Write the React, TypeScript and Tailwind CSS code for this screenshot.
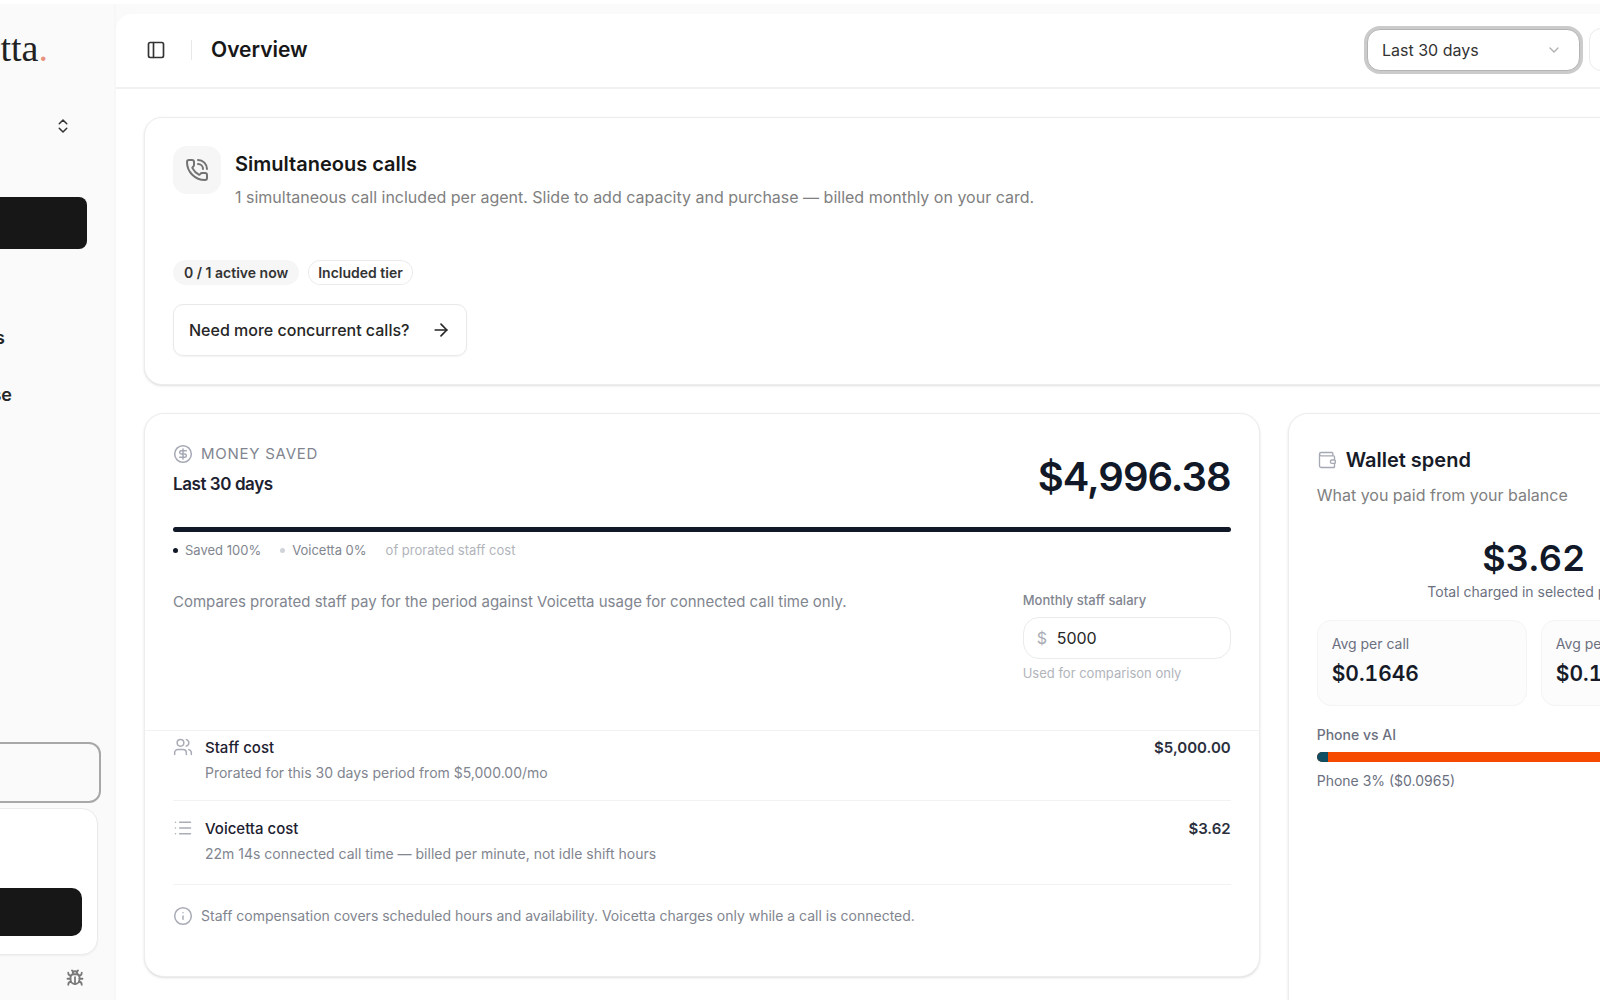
import {
  ArrowRight,
  Bug,
  ChevronDown,
  ChevronsUpDown,
  CircleDollarSign,
  Info,
  List,
  PanelLeft,
  PhoneCall,
  Users,
  Wallet,
} from 'lucide-react';
import { useState } from 'react';
import type { LucideIcon } from 'lucide-react';

const costRows: { icon: LucideIcon; title: string; detail: string; amount: string }[] = [
  {
    icon: Users,
    title: 'Staff cost',
    detail: 'Prorated for this 30 days period from $5,000.00/mo',
    amount: '$5,000.00',
  },
  {
    icon: List,
    title: 'Voicetta cost',
    detail: '22m 14s connected call time — billed per minute, not idle shift hours',
    amount: '$3.62',
  },
];

const averages = [
  { label: 'Avg per call', value: '$0.1646' },
  { label: 'Avg per minute', value: '$0.1628' },
];

function Sidebar() {
  return (
    <aside className="flex w-[116px] shrink-0 justify-end overflow-hidden">
      <div className="flex w-[272px] shrink-0 flex-col border-r-2 border-[#f7f7f7]">
        <div className="mt-3 flex h-16 items-center justify-end pr-[66px] font-['Liberation_Serif',serif] text-[38px] text-[#222222]">
          Voicetta<span className="text-[#e8917c]">.</span>
        </div>
        <button type="button" aria-label="Switch workspace" className="mt-[18px] flex h-14 items-center justify-end pr-[42px]">
          <ChevronsUpDown className="size-[18px] text-[#333333]" />
        </button>
        <nav className="mt-[43px] flex flex-col">
          <a href="#overview" aria-label="Overview" className="mr-[27px] h-[52px] rounded-lg bg-[#171717]" />
          <a
            href="#numbers"
            className="mt-[60px] flex h-[57px] items-center justify-end pr-[109px] text-[18px] font-semibold text-[#262626]"
          >
            Phone numbers
          </a>
          <a
            href="#knowledge"
            className="flex h-[57px] items-center justify-end pr-[102px] text-[18px] font-semibold text-[#262626]"
          >
            Knowledge base
          </a>
        </nav>
        <div className="mt-auto flex flex-col">
          <button
            type="button"
            aria-label="Account"
            className="mr-[13px] h-[61px] rounded-xl border-2 border-[#a8a8a8] bg-[#fafafa]"
          />
          <div className="mt-[5px] mr-4 h-[147px] rounded-2xl border border-[#ebebeb] bg-white px-[15px] pt-[79px] shadow-xs">
            <button type="button" aria-label="Add credit" className="block h-[48px] w-full rounded-[10px] bg-[#171717]" />
          </div>
          <button type="button" aria-label="Report a bug" className="flex h-[45px] items-center justify-end pr-[30px]">
            <Bug className="size-[18px] text-[#7a7a7a]" strokeWidth={2.4} />
          </button>
        </div>
      </div>
    </aside>
  );
}

function Header() {
  const [range, setRange] = useState('30');

  return (
    <header className="flex h-[75px] items-center border-b-2 border-[#f1f1f1] pb-[2px] pl-[30px]">
      <button type="button" aria-label="Toggle sidebar">
        <PanelLeft className="size-5 text-[#333333]" />
      </button>
      <div className="ml-[25px] h-5 w-px bg-[#e8e8e8]" />
      <h1 className="ml-[19px] text-[21px] font-semibold text-[#171717]">Overview</h1>
      <div className="relative ml-auto">
        <select
          aria-label="Date range"
          value={range}
          onChange={(event) => setRange(event.target.value)}
          className="h-[42px] w-[213px] appearance-none rounded-[13px] border border-[#b4b4b4] bg-white pl-[14px] text-[16px] text-[#333333] ring-3 ring-[#cbcbcb] outline-none"
        >
          <option value="7">Last 7 days</option>
          <option value="30">Last 30 days</option>
          <option value="90">Last 90 days</option>
        </select>
        <ChevronDown className="pointer-events-none absolute top-[13px] right-[18px] size-4 text-[#b0b0b0]" />
      </div>
      <button
        type="button"
        aria-label="Refresh"
        className="ml-[9px] h-[43px] w-[219px] shrink-0 rounded-xl border border-[#ebebeb] bg-white"
      />
    </header>
  );
}

function SimultaneousCalls() {
  return (
    <section className="rounded-[18px] border border-[#ededed] bg-white p-7 shadow-sm">
      <div className="flex gap-[14px]">
        <div className="flex size-12 items-center justify-center rounded-[14px] bg-[#f6f6f6]">
          <PhoneCall className="size-6 text-[#737373]" />
        </div>
        <div>
          <h2 className="mt-[2px] text-[20px] leading-8 font-semibold text-[#171717]">Simultaneous calls</h2>
          <p className="mt-[5px] text-[16px] leading-6 text-[#808080]">
            1 simultaneous call included per agent. Slide to add capacity and purchase — billed monthly on your card.
          </p>
        </div>
      </div>
      <div className="mt-[51px] flex gap-[9px] text-[14px] leading-[25px] font-semibold text-[#333333]">
        <span className="rounded-full bg-[#f6f6f6] px-[11px]">0 / 1 active now</span>
        <span className="rounded-full bg-white px-[10px] ring-1 ring-[#ebebeb] ring-inset">Included tier</span>
      </div>
      <button
        type="button"
        className="mt-[19px] flex h-[52px] items-center gap-[22px] rounded-[10px] border border-[#e9e9e9] px-[15px] text-[16px] font-medium text-[#262626] shadow-xs"
      >
        Need more concurrent calls?
        <ArrowRight className="size-5" />
      </button>
    </section>
  );
}

function MoneySaved() {
  const [salary, setSalary] = useState('5000');

  return (
    <section className="self-start rounded-[20px] border border-[#ededed] bg-white pb-12 text-[#81858f] shadow-sm">
      <div className="px-7">
        <div className="flex items-start justify-between pt-[26px]">
          <div>
            <p className="flex items-center gap-2 text-[15px] leading-7 tracking-wider uppercase">
              <CircleDollarSign className="size-5 text-[#a5a9b4]" strokeWidth={1.8} />
              Money saved
            </p>
            <h2 className="text-[17px] leading-8 font-semibold tracking-tight text-[#1d2130]">Last 30 days</h2>
          </div>
          <p className="mt-[13px] text-[40px] leading-[48px] font-semibold tracking-tight text-[#111827]">$4,996.38</p>
        </div>
        <div className="mt-[26px] h-[5px] rounded-full bg-[#111827]" />
        <div className="mt-2 flex items-center text-[13px] leading-5">
          <span className="mr-[7px] size-[5px] rounded-full bg-[#111827]" />
          Saved 100%
          <span className="mr-[7px] ml-[19px] size-[5px] rounded-full bg-[#d0d3d9]" />
          Voicetta 0%
          <span className="ml-[19px] text-[#b1b4bb]">of prorated staff cost</span>
        </div>
        <div className="mt-[30px] flex justify-between gap-8">
          <p className="text-[15px] leading-6">
            Compares prorated staff pay for the period against Voicetta usage for connected call time only.
          </p>
          <div className="w-[208px] shrink-0">
            <label htmlFor="salary" className="block text-[13px] leading-5 font-medium">
              Monthly staff salary
            </label>
            <div className="relative mt-[7px] text-[16px]">
              <span className="absolute top-2 left-[14px] leading-[26px] text-[#a9acb4]">$</span>
              <input
                id="salary"
                inputMode="numeric"
                value={salary}
                onChange={(event) => setSalary(event.target.value)}
                className="h-[42px] w-full rounded-2xl border border-[#e9ebed] bg-white pl-[33px] text-[#262626] outline-none"
              />
            </div>
            <p className="mt-1 text-[13px] leading-5 text-[#b1b4bb]">Used for comparison only</p>
          </div>
        </div>
      </div>

      <ul className="mt-[47px] border-t border-[#f1f2f3] px-7">
        {costRows.map(({ icon: Icon, title, detail, amount }) => (
          <li key={title} className="flex items-start border-b border-[#f1f2f3] pt-1 first:h-[70px] last:h-[84px] last:pt-[15px]">
            <Icon className="mt-[2px] size-5 text-[#a9acb6]" strokeWidth={1.8} />
            <div className="ml-3">
              <h3 className="text-[15px] leading-[25px] font-medium text-[#1d2130]">{title}</h3>
              <p className="text-[14px] leading-[25px]">{detail}</p>
            </div>
            <p className="ml-auto text-[15px] leading-[25px] font-semibold text-[#2b2f3d]">{amount}</p>
          </li>
        ))}
      </ul>
      <p className="mt-[19px] flex items-center gap-2 px-7 text-[14px] leading-6">
        <Info className="size-5 text-[#a9acb6]" strokeWidth={1.8} />
        Staff compensation covers scheduled hours and availability. Voicetta charges only while a call is connected.
      </p>
    </section>
  );
}

function WalletSpend() {
  return (
    <section className="h-[640px] rounded-[20px] border border-[#ededed] bg-white px-7 pt-[30px] text-[#6b7080] shadow-sm">
      <div className="flex items-center gap-[9px]">
        <Wallet className="size-5 text-[#a5a9b4]" strokeWidth={1.6} />
        <h2 className="text-[20px] leading-8 font-semibold text-[#171b28]">Wallet spend</h2>
      </div>
      <p className="mt-[7px] text-[16px] leading-6 text-[#808080]">What you paid from your balance</p>
      <div className="mt-[27px] text-center">
        <p className="text-[36px] leading-[48px] font-semibold text-[#111827] tabular-nums">$3.62</p>
        <p className="text-[14px] leading-5">Total charged in selected period</p>
      </div>
      <div className="mt-[18px] grid grid-cols-2 gap-[14px]">
        {averages.map((item) => (
          <div key={item.label} className="h-[86px] rounded-[14px] border border-[#f3f4f6] bg-[#fcfcfd] px-[14px] pt-[13px]">
            <p className="text-[14px] leading-5">{item.label}</p>
            <p className="mt-1 text-[21px] leading-8 font-semibold text-[#171b28] tabular-nums">{item.value}</p>
          </div>
        ))}
      </div>
      <p className="mt-[19px] text-[14px] leading-5 font-medium">Phone vs AI</p>
      <div className="mt-[7px] flex h-[10px] overflow-hidden rounded-full bg-[#f54a00]">
        <div className="bg-[#104e64]" style={{ width: `${(0.0965 / 3.62) * 100}%` }} />
      </div>
      <p className="mt-[9px] text-[14px] leading-5">Phone 3% ($0.0965)</p>
    </section>
  );
}

export default function App() {
  return (
    <div className="h-screen overflow-hidden bg-white pt-1 font-['Inter',sans-serif]">
      <div className="flex h-full bg-[#fafafa]">
        <Sidebar />
        {/* the workspace is wider than the window and runs off its right edge */}
        <main className="mt-[10px] w-[calc(100%+92px)] shrink-0 rounded-tl-2xl bg-white">
          <Header />
          <div className="px-7 pt-7">
            <SimultaneousCalls />
            <div className="mt-7 grid grid-cols-[1115fr_492fr] gap-7">
              <MoneySaved />
              <WalletSpend />
            </div>
          </div>
        </main>
      </div>
    </div>
  );
}
